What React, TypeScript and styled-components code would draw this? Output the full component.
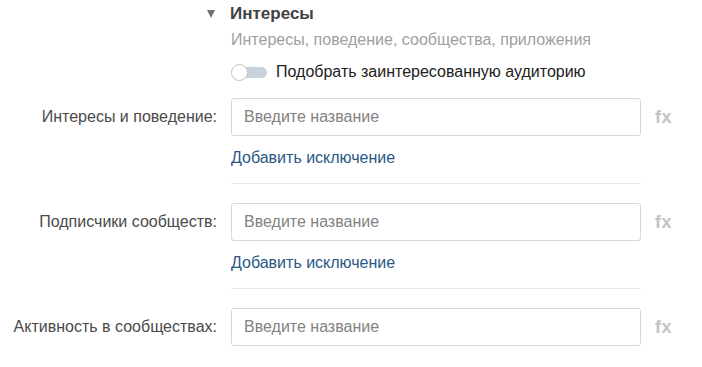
import React from 'react'
import styled, { createGlobalStyle } from 'styled-components'

const GlobalStyle = createGlobalStyle`
  body {
    margin: 0;
    background: #fff;
    font-family: 'Liberation Sans', Arial, sans-serif;
  }
`

const Page = styled.div`
  width: 702px;
  height: 367px;
  overflow: hidden;
  padding-top: 4px;
  box-sizing: border-box;
`

const Grid = styled.div`
  display: grid;
  grid-template-columns: 217px 410px auto;
  column-gap: 14px;
`

const Arrow = styled.div`
  justify-self: end;
  align-self: center;
  margin-right: 2px;
  width: 0;
  height: 0;
  border-left: 4px solid transparent;
  border-right: 4px solid transparent;
  border-top: 8px solid #707070;
`

const Title = styled.div`
  grid-column: 2 / 4;
  margin-left: -1px;
  font-size: 17px;
  line-height: 20px;
  font-weight: bold;
  color: #424242;
`

const Subtitle = styled.div`
  grid-column: 2 / 4;
  margin-top: 6px;
  font-size: 16px;
  line-height: 20px;
  color: #a0a0a0;
`

const ToggleRow = styled.label`
  grid-column: 2 / 4;
  margin-top: 12px;
  display: flex;
  align-items: center;
  gap: 9px;
  font-size: 16px;
  line-height: 20px;
  color: #222;
`

const Track = styled.span`
  position: relative;
  display: inline-block;
  width: 35px;
  height: 11px;
  margin-left: 1px;
  border-radius: 6px;
  background: #c8d1dc;
`

const Knob = styled.span`
  position: absolute;
  left: -1px;
  top: 50%;
  width: 15px;
  height: 15px;
  margin-top: -8.5px;
  border-radius: 50%;
  background: #fff;
  border: 1px solid #c3c3c3;
`

const Label = styled.div`
  justify-self: end;
  align-self: center;
  font-size: 16px;
  color: #4a4a4a;
  white-space: nowrap;
`

const Input = styled.input`
  height: 38px;
  box-sizing: border-box;
  border: 1px solid #d3d9de;
  border-radius: 3px;
  padding: 0 12px;
  font-family: inherit;
  font-size: 16px;
  color: #222;
  outline: none;
  &::placeholder {
    color: #828282;
  }
`

const Fx = styled.div`
  align-self: center;
  font-size: 18px;
  font-weight: bold;
  color: #c4c4c4;
  letter-spacing: 0.5px;
`

const FieldRow = styled(Grid)<{ $first?: boolean }>`
  margin-top: ${({ $first }) => ($first ? '16px' : '19px')};
`

const ExtraLink = styled.a`
  grid-column: 2;
  margin-top: 12px;
  font-size: 16px;
  line-height: 20px;
  color: #2a5885;
  text-decoration: none;
  cursor: pointer;
`

const Divider = styled.div`
  grid-column: 2;
  margin-top: 15px;
  height: 1px;
  background: #e7e8ec;
`

const fields = [
  { label: 'Интересы и поведение:', exclude: true },
  { label: 'Подписчики сообществ:', exclude: true },
  { label: 'Активность в сообществах:', exclude: false },
]

export default function App() {
  return (
    <Page>
      <GlobalStyle />
      <Grid>
        <Arrow />
        <Title>Интересы</Title>
        <div />
        <Subtitle>Интересы, поведение, сообщества, приложения</Subtitle>
        <div />
        <ToggleRow>
          <Track>
            <Knob />
          </Track>
          Подобрать заинтересованную аудиторию
        </ToggleRow>
      </Grid>
      {fields.map((f, i) => (
        <FieldRow key={i} $first={i === 0}>
          <Label>{f.label}</Label>
          <Input placeholder="Введите название" />
          <Fx>fx</Fx>
          {f.exclude && (
            <>
              <ExtraLink>Добавить исключение</ExtraLink>
              <Divider />
            </>
          )}
        </FieldRow>
      ))}
    </Page>
  )
}
